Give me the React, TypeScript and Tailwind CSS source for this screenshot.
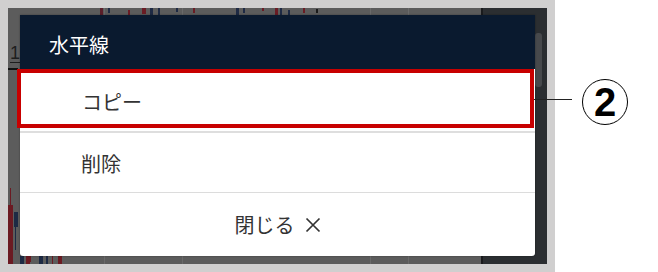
import React from "react";

const candles: { x: number; y: number; w: number; h: number; c: string }[] = [
  { x: 92, y: 0, w: 3, h: 7, c: "#5a1f2a" },
  { x: 100, y: 0, w: 2, h: 5, c: "#1e2a44" },
  { x: 120, y: 2, w: 2, h: 5, c: "#6a1c24" },
  { x: 134, y: 0, w: 4, h: 6, c: "#6a1c24" },
  { x: 142, y: 0, w: 3, h: 7, c: "#1e2a44" },
  { x: 150, y: 0, w: 2, h: 7, c: "#1e2a44" },
  { x: 168, y: 0, w: 2, h: 4, c: "#1e2a44" },
  { x: 185, y: 0, w: 2, h: 5, c: "#6a1c24" },
  { x: 228, y: 0, w: 3, h: 7, c: "#1e2a44" },
  { x: 235, y: 0, w: 2, h: 5, c: "#1e2a44" },
  { x: 254, y: 0, w: 2, h: 3, c: "#6a1c24" },
  { x: 267, y: 0, w: 3, h: 7, c: "#6a1c24" },
  { x: 272, y: 0, w: 2, h: 7, c: "#1e2a44" },
  { x: 280, y: 2, w: 2, h: 5, c: "#1e2a44" },
  { x: 295, y: 0, w: 2, h: 5, c: "#6a1c24" },
  { x: 308, y: 1, w: 2, h: 4, c: "#1a1a1a" },
  { x: 0, y: 197, w: 5, h: 59, c: "#6b1a22" },
  { x: 2, y: 180, w: 1, h: 17, c: "#6b1a22" },
  { x: 6, y: 204, w: 4, h: 15, c: "#1d2a44" },
  { x: 7, y: 219, w: 1, h: 23, c: "#1d2a44" },
  { x: 12, y: 248, w: 4, h: 8, c: "#1d2a44" },
  { x: 18, y: 248, w: 4, h: 8, c: "#6b1a22" },
  { x: 22, y: 248, w: 1, h: 6, c: "#6b1a22" },
  { x: 31, y: 248, w: 4, h: 8, c: "#1d2a44" },
  { x: 38, y: 248, w: 2, h: 8, c: "#1d2a44" },
  { x: 44, y: 248, w: 1, h: 8, c: "#6b1a22" },
  { x: 50, y: 248, w: 4, h: 8, c: "#6b1a22" },
];

function Chart() {
  return (
    <div className="absolute inset-0 flex">
      <div className="relative w-[473px] h-full bg-[#5c5c5c]">
        <div className="absolute left-[96px] top-0 w-[1px] h-full bg-[#6a6a6a]" />
        <div className="absolute left-[174px] top-0 w-[1px] h-full bg-[#6a6a6a]" />
        <div className="absolute left-[362px] top-0 w-[1px] h-full bg-[#6a6a6a]" />
        <div className="absolute left-[400px] top-0 w-[1px] h-full bg-[#6a6a6a]" />
        <div className="absolute left-[2px] top-[36px] flex flex-col items-start">
          <span className="text-[18px] leading-none text-[#1e1e1e] border-b border-[#1e1e1e]" style={{ fontFamily: '"Liberation Sans", sans-serif' }}>1</span>
        </div>
        <div className="absolute left-0 top-[60px] w-[10px] h-[2px] bg-[#111]" />
        {candles.map((c, i) => (
          <div
            key={i}
            className="absolute"
            style={{ left: c.x, top: c.y, width: c.w, height: c.h, background: c.c }}
          />
        ))}
      </div>
      <div className="w-[2px] h-full bg-[#1a1b1d]" />
      <div className="flex-1 h-full bg-[#2b2e31] pl-[52px] pt-[25px]">
        <div className="w-[7px] h-[54px] rounded-[3px] bg-[#47494c]" />
      </div>
    </div>
  );
}

export default function App() {
  const font = { fontFamily: '"Noto Sans CJK JP", "Noto Sans", sans-serif' };
  return (
    <div className="flex w-[658px] h-[272px] bg-white overflow-hidden" style={font}>
      <div className="w-[555px] h-[272px] bg-[#d0cfcf] p-[8px] shrink-0">
        <div className="relative w-[539px] h-[256px] overflow-hidden">
          <Chart />
          {/* modal */}
          <div className="relative pt-[7px] pl-[12px]">
            <div className="relative w-[515px] bg-white rounded-b-[3px] shadow-[0_0_2px_rgba(0,0,0,0.4)]">
              <div className="h-[54px] bg-[#0a1a2f] flex items-center pl-[29px] pt-[5px] text-white text-[20px]">
                水平線
              </div>
              <div className="h-[64px] border-b-[2px] border-[#dedede] flex items-center pl-[62px] pt-[4px] text-[#333] text-[20px]">
                コピー
              </div>
              <div className="h-[60px] border-b border-[#dcdcdc] flex items-center pl-[61px] pt-[2px] text-[#333] text-[20px]">
                削除
              </div>
              <div className="h-[63px] flex items-center justify-center gap-[10px] text-[#333] text-[20px]">
                <span>閉じる</span>
                <svg width="16" height="16" viewBox="0 0 16 16" className="mt-[1px]">
                  <path d="M1.5 1.5 L14.5 14.5 M14.5 1.5 L1.5 14.5" stroke="#333" strokeWidth="1.7" fill="none" />
                </svg>
              </div>
              {/* annotation box */}
              <div className="absolute left-[-3px] top-[54px] w-[517px] h-[59px] border-[4px] border-[#c80000]" />
            </div>
          </div>
        </div>
      </div>
      {/* callout */}
      <div className="relative flex items-start pt-[79px] -ml-[21px]">
        <div className="w-[38px] h-[1px] bg-[#222] mt-[20px]" />
        <div className="ml-[10px] w-[46px] h-[46px] rounded-full border-[1.5px] border-black flex items-center justify-center">
          <span className="text-[40px] font-bold leading-none text-black" style={{ fontFamily: '"Liberation Sans", sans-serif' }}>2</span>
        </div>
      </div>
    </div>
  );
}
